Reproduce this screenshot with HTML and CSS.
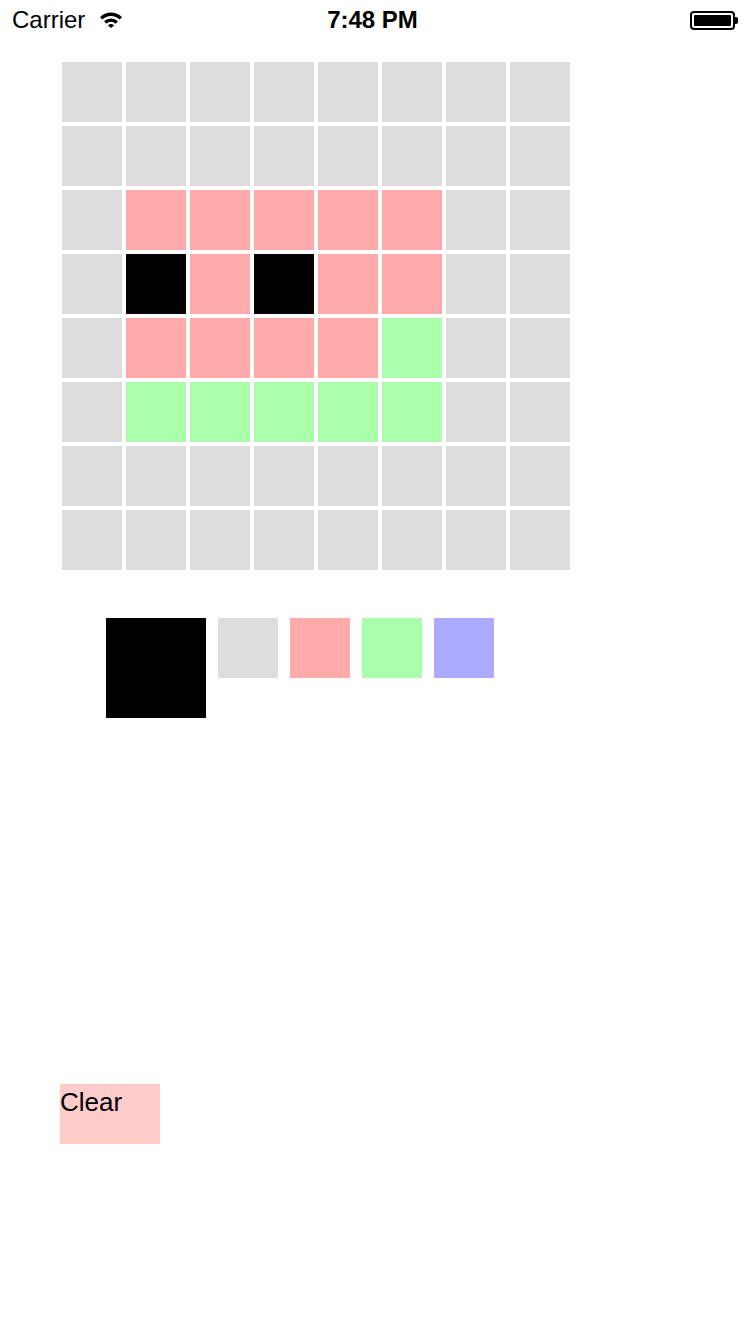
FILE: index.html
```html
<!DOCTYPE html>
<html>
<head>
<meta charset="utf-8">
<link rel="stylesheet" href="styles.css">
</head>
<body>
<div class="statusbar">
  <div class="sb-left">
    <span class="carrier">Carrier</span>
    <svg class="wifi" width="24" height="17" viewBox="0 0 24 17">
      <path d="M1 6.2 A15.5 15.5 0 0 1 23 6.2 L20.6 8.6 A12 12 0 0 0 3.4 8.6 Z" fill="#000"/>
      <path d="M5 10.3 A10 10 0 0 1 19 10.3 L16.6 12.7 A6.6 6.6 0 0 0 7.4 12.7 Z" fill="#000"/>
      <path d="M9 14.4 A4.3 4.3 0 0 1 15 14.4 L12 17 Z" fill="#000"/>
    </svg>
  </div>
  <div class="sb-time">7:48 PM</div>
  <div class="sb-right">
    <div class="battery"><div class="battery-fill"></div></div>
    <div class="battery-tip"></div>
  </div>
</div>

<div class="grid">
  <div class="cell g"></div><div class="cell g"></div><div class="cell g"></div><div class="cell g"></div><div class="cell g"></div><div class="cell g"></div><div class="cell g"></div><div class="cell g"></div>
  <div class="cell g"></div><div class="cell g"></div><div class="cell g"></div><div class="cell g"></div><div class="cell g"></div><div class="cell g"></div><div class="cell g"></div><div class="cell g"></div>
  <div class="cell g"></div><div class="cell r"></div><div class="cell r"></div><div class="cell r"></div><div class="cell r"></div><div class="cell r"></div><div class="cell g"></div><div class="cell g"></div>
  <div class="cell g"></div><div class="cell k"></div><div class="cell r"></div><div class="cell k"></div><div class="cell r"></div><div class="cell r"></div><div class="cell g"></div><div class="cell g"></div>
  <div class="cell g"></div><div class="cell r"></div><div class="cell r"></div><div class="cell r"></div><div class="cell r"></div><div class="cell n"></div><div class="cell g"></div><div class="cell g"></div>
  <div class="cell g"></div><div class="cell n"></div><div class="cell n"></div><div class="cell n"></div><div class="cell n"></div><div class="cell n"></div><div class="cell g"></div><div class="cell g"></div>
  <div class="cell g"></div><div class="cell g"></div><div class="cell g"></div><div class="cell g"></div><div class="cell g"></div><div class="cell g"></div><div class="cell g"></div><div class="cell g"></div>
  <div class="cell g"></div><div class="cell g"></div><div class="cell g"></div><div class="cell g"></div><div class="cell g"></div><div class="cell g"></div><div class="cell g"></div><div class="cell g"></div>
</div>

<div class="palette">
  <div class="swatch selected k"></div>
  <div class="swatch g"></div>
  <div class="swatch r"></div>
  <div class="swatch n"></div>
  <div class="swatch b"></div>
</div>

<div class="actions">
  <div class="clear-btn">Clear</div>
</div>
</body>
</html>
```

FILE: styles.css
```css
html, body {
  margin: 0;
  padding: 0;
  background: #fff;
  width: 750px;
  height: 1334px;
  overflow: hidden;
  font-family: "Liberation Sans", Arial, sans-serif;
  color: #000;
}

.statusbar {
  height: 40px;
  display: flex;
  align-items: center;
  justify-content: space-between;
  padding: 0 12px;
}

.sb-left {
  display: flex;
  align-items: center;
  gap: 14px;
  font-size: 24px;
  width: 200px;
}

.carrier {
  line-height: 1;
}

.wifi {
  display: block;
  margin-top: -1px;
}

.sb-time {
  font-size: 24px;
  font-weight: bold;
  line-height: 1;
  margin-left: -5px;
}

.sb-right {
  width: 200px;
  display: flex;
  justify-content: flex-end;
  align-items: center;
}

.battery {
  width: 37px;
  height: 11px;
  border: 2px solid #000;
  border-radius: 4px;
  padding: 2px;
  box-sizing: content-box;
  margin-top: 1px;
}

.battery-fill {
  width: 100%;
  height: 100%;
  background: #000;
  border-radius: 1px;
}

.battery-tip {
  width: 3px;
  height: 7px;
  background: #000;
  border-radius: 0 2px 2px 0;
  margin-top: 1px;
}

.grid {
  display: grid;
  grid-template-columns: repeat(8, 60px);
  grid-auto-rows: 60px;
  gap: 4px;
  padding: 22px 0 0 62px;
}

.g { background: #dddddd; }
.r { background: #ffaaaa; }
.n { background: #aaffaa; }
.b { background: #aaaaff; }
.k { background: #000000; }

.palette {
  display: flex;
  align-items: flex-start;
  gap: 12px;
  padding: 48px 0 0 106px;
}

.swatch {
  width: 60px;
  height: 60px;
}

.swatch.selected {
  width: 100px;
  height: 100px;
}

.actions {
  padding: 366px 0 0 60px;
}

.clear-btn {
  width: 100px;
  height: 60px;
  background: #ffcccc;
  font-size: 26px;
  line-height: 36px;
  box-sizing: border-box;
}
```
